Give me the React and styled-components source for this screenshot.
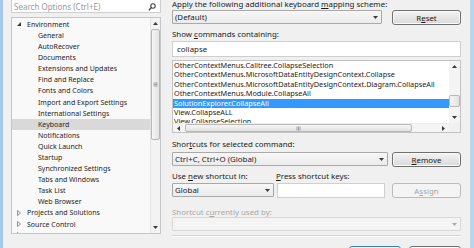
import React from "react";
import styled, { createGlobalStyle } from "styled-components";

const Global = createGlobalStyle`
  html, body { margin: 0; padding: 0; background: #f0f0f0; overflow: hidden; }
  body { font-family: "Noto Sans", "DejaVu Sans", sans-serif; color: #1b1b1b; }
  * { box-sizing: border-box; }
`;

const Frame = styled.div`
  width: 474px;
  height: 248px;
  display: flex;
  overflow: hidden;
  background: #f0f0f0;
`;

const Edge = styled.div`
  flex: 0 0 ${(p) => p.$w}px;
  background: ${(p) => p.$c};
`;

const Body = styled.div`
  flex: 1;
  min-width: 0;
  display: flex;
  gap: 11px;
  padding: 0 9px 0 8px;
`;

const LeftCol = styled.div`
  width: 150px;
  flex: 0 0 150px;
  display: flex;
  flex-direction: column;
  & > * { flex-shrink: 0; }
`;

const SearchBox = styled.div`
  height: 20px;
  margin-top: -7px;
  padding: 7px 4px 0 2px;
  border: 1px solid #cfcfcf;
  background: #fff;
  display: flex;
  align-items: center;
  justify-content: space-between;
  font-size: 8px;
  color: #9a9a9a;
  white-space: nowrap;
`;

const Tree = styled.div`
  margin-top: 4px;
  height: 217px;
  border: 1px solid #c6c6c6;
  background: #f9f9f9;
  display: grid;
  grid-template-columns: minmax(0, 1fr) 10px;
  grid-template-rows: minmax(0, 1fr);
  overflow: hidden;
`;

const TreeRows = styled.div`
  padding-top: 0.8px;
  min-width: 0;
  overflow: hidden;
`;

const TreeRow = styled.div`
  height: 11.1px;
  display: flex;
  align-items: center;
  padding-left: ${(p) => (p.$child ? 26 : 5)}px;
  background: ${(p) => (p.$selected ? "#d9d9d9" : "transparent")};
  font-size: 7px;
  white-space: nowrap;
  color: #1e1e1e;
`;

const Expander = styled.span`
  width: 10px;
  flex: 0 0 10px;
  display: flex;
  align-items: center;
`;

const VScroll = styled.div`
  display: flex;
  flex-direction: column;
  background: #f3f3f3;
  border-left: 1px solid #e4e4e4;
  min-height: 0;
  overflow: hidden;
`;

const ArrowBtn = styled.div`
  height: ${(p) => p.$h}px;
  flex: 0 0 ${(p) => p.$h}px;
  display: flex;
  align-items: center;
  justify-content: center;
`;

const Track = styled.div`
  flex: 1;
  min-height: 0;
  min-width: 0;
  display: flex;
  flex-direction: ${(p) => (p.$horizontal ? "row" : "column")};
  padding-${(p) => (p.$horizontal ? "left" : "top")}: ${(p) => p.$offset}px;
`;

const Thumb = styled.div`
  ${(p) =>
    p.$horizontal
      ? `width: ${p.$len}px; height: 100%;`
      : `height: ${p.$len}px; width: 100%;`}
  flex-shrink: 0;
  border: 1px solid #b8b8b8;
  border-radius: 2px;
  background: linear-gradient(${(p) => (p.$horizontal ? "180deg" : "90deg")}, #f6f6f6, #e2e2e2);
  display: flex;
  align-items: center;
  justify-content: center;
`;

const RightCol = styled.div`
  width: 289px;
  flex: 0 0 289px;
  display: flex;
  flex-direction: column;
  & > * { flex-shrink: 0; }
`;

const Label = styled.div`
  font-size: 7.9px;
  line-height: 9px;
  height: 9px;
  margin-top: ${(p) => p.$mt || 0}px;
  color: ${(p) => (p.$disabled ? "#a8a8a8" : "#1b1b1b")};
  white-space: nowrap;
  width: ${(p) => (p.$w ? `${p.$w}px` : "auto")};
  flex-shrink: 0;
`;

const U = styled.span`
  text-decoration: underline;
`;

const Row = styled.div`
  display: flex;
  align-items: flex-start;
  gap: ${(p) => p.$gap}px;
  margin-top: ${(p) => p.$mt || 0}px;
  justify-content: ${(p) => p.$justify || "flex-start"};
  & > * { flex-shrink: 0; }
`;

const Combo = styled.div`
  width: ${(p) => (p.$w ? `${p.$w}px` : "100%")};
  height: 14px;
  border: 1px solid ${(p) => (p.$disabled ? "#d6d6d6" : "#a9a9a9")};
  border-radius: 1px;
  background: ${(p) =>
    p.$disabled ? "#f4f4f4" : "linear-gradient(#f7f7f7, #ebebeb)"};
  display: flex;
  align-items: center;
  justify-content: space-between;
  padding: 0 3px 0 2px;
  font-size: 7.9px;
  color: #1b1b1b;
  white-space: nowrap;
`;

const Button = styled.div`
  width: ${(p) => p.$w}px;
  height: ${(p) => p.$h || 15}px;
  margin-left: ${(p) => p.$ml || 0}px;
  border: 1px solid
    ${(p) => (p.$default ? "#3c7fb1" : p.$disabled ? "#b8bcbf" : "#707070")};
  border-radius: 3px;
  background: ${(p) =>
    p.$disabled ? "#f4f4f4" : "linear-gradient(#f4f4f4, #e6e6e6 50%, #dadada)"};
  box-shadow: inset 0 0 0 1px ${(p) => (p.$disabled ? "transparent" : "#fbfbfb")};
  display: flex;
  align-items: center;
  justify-content: center;
  font-size: 7.9px;
  color: ${(p) => (p.$disabled ? "#a6a6a6" : "#1b1b1b")};
`;

const TextBox = styled.div`
  width: ${(p) => (p.$w ? `${p.$w}px` : "100%")};
  height: ${(p) => p.$h}px;
  margin-top: ${(p) => p.$mt || 0}px;
  border: 1px solid #cfcfcf;
  background: #fff;
  display: flex;
  align-items: center;
  padding-left: 4px;
  font-size: 7.9px;
`;

const ListBox = styled.div`
  margin-top: 3px;
  height: 73px;
  border: 1px solid #c3c3c3;
  background: #fff;
  display: grid;
  grid-template-columns: minmax(0, 1fr) 11px;
  grid-template-rows: minmax(0, 1fr) 9px;
  overflow: hidden;
`;

const ListRows = styled.div`
  overflow: hidden;
  min-width: 0;
  min-height: 0;
`;

const ListRow = styled.div`
  height: 9.4px;
  line-height: 9.4px;
  padding-left: 1px;
  font-size: 7.3px;
  white-space: nowrap;
  background: ${(p) => (p.$selected ? "#3399ff" : "transparent")};
  color: ${(p) => (p.$selected ? "#ffffff" : "#1b1b1b")};
`;

const ListVScroll = styled.div`
  display: flex;
  flex-direction: column;
  background: #f4f4f4;
  min-height: 0;
  overflow: hidden;
`;

const HScroll = styled.div`
  display: flex;
  background: #f4f4f4;
  border-top: 1px solid #ececec;
  min-width: 0;
  overflow: hidden;
`;

const HArrow = styled.div`
  width: ${(p) => p.$w}px;
  flex: 0 0 ${(p) => p.$w}px;
  display: flex;
  align-items: center;
  justify-content: center;
`;

const Corner = styled.div`
  background: #f0f0f0;
`;

const Separator = styled.div`
  margin-top: 4px;
  border-top: 1px solid #d5d5d5;
  border-bottom: 1px solid #ffffff;
`;

const Arrow = ({ dir = "down", size = 5, color = "#3a3a3a" }) => {
  const pts = {
    down: "0,0 5,0 2.5,3",
    up: "0,3 5,3 2.5,0",
    left: "3,0 3,5 0,2.5",
    right: "0,0 0,5 3,2.5",
  }[dir];
  const vertical = dir === "up" || dir === "down";
  return (
    <svg
      width={vertical ? size : 3}
      height={vertical ? 3 : size}
      viewBox={vertical ? "0 0 5 3" : "0 0 3 5"}
    >
      <polygon points={pts} fill={color} />
    </svg>
  );
};

const Grip = ({ horizontal }) => (
  <svg width="5" height="5" viewBox="0 0 5 5">
    {horizontal
      ? [0.5, 2, 3.5].map((x) => (
          <line key={x} x1={x + 0.5} y1="0.5" x2={x + 0.5} y2="4.5" stroke="#8a8a8a" strokeWidth="0.8" />
        ))
      : [0.5, 2, 3.5].map((y) => (
          <line key={y} x1="0.5" y1={y + 0.5} x2="4.5" y2={y + 0.5} stroke="#8a8a8a" strokeWidth="0.8" />
        ))}
  </svg>
);

const SearchIcon = () => (
  <svg width="8" height="8" viewBox="0 0 8 8">
    <circle cx="5" cy="3" r="2.2" fill="none" stroke="#444" strokeWidth="1.1" />
    <line x1="3.4" y1="4.6" x2="0.8" y2="7.2" stroke="#444" strokeWidth="1.4" />
  </svg>
);

const ExpandedGlyph = () => (
  <svg width="4" height="4" viewBox="0 0 4 4">
    <polygon points="4,0 4,4 0,4" fill="#333" />
  </svg>
);

const CollapsedGlyph = () => (
  <svg width="4" height="6" viewBox="0 0 4 6">
    <polygon points="0.5,0.5 3.5,3 0.5,5.5" fill="none" stroke="#777" strokeWidth="0.8" />
  </svg>
);

const treeItems = [
  { t: "Environment", top: true, open: true },
  { t: "General" },
  { t: "AutoRecover" },
  { t: "Documents" },
  { t: "Extensions and Updates" },
  { t: "Find and Replace" },
  { t: "Fonts and Colors" },
  { t: "Import and Export Settings" },
  { t: "International Settings" },
  { t: "Keyboard", sel: true },
  { t: "Notifications" },
  { t: "Quick Launch" },
  { t: "Startup" },
  { t: "Synchronized Settings" },
  { t: "Tabs and Windows" },
  { t: "Task List" },
  { t: "Web Browser" },
  { t: "Projects and Solutions", top: true },
  { t: "Source Control", top: true },
  { t: "Text Editor", top: true },
];

const commands = [
  "OtherContextMenus.Calltree.CollapseSelection",
  "OtherContextMenus.MicrosoftDataEntityDesignContext.Collapse",
  "OtherContextMenus.MicrosoftDataEntityDesignContext.Diagram.CollapseAll",
  "OtherContextMenus.Module.CollapseAll",
  "SolutionExplorer.CollapseAll",
  "View.CollapseALL",
  "View.CollapseSelection",
];

export default function App() {
  return (
    <>
      <Global />
      <Frame>
        <Edge $w={3} $c="#a8c8ea" />
        <Body>
          <LeftCol>
            <SearchBox>
              <span>Search Options (Ctrl+E)</span>
              <SearchIcon />
            </SearchBox>
            <Tree>
              <TreeRows>
                {treeItems.map((it) => (
                  <TreeRow key={it.t} $child={!it.top} $selected={it.sel}>
                    {it.top && (
                      <Expander>{it.open ? <ExpandedGlyph /> : <CollapsedGlyph />}</Expander>
                    )}
                    {it.t}
                  </TreeRow>
                ))}
              </TreeRows>
              <VScroll>
                <ArrowBtn $h={11}>
                  <Arrow dir="up" />
                </ArrowBtn>
                <Track $offset={0}>
                  <Thumb $len={111}>
                    <Grip />
                  </Thumb>
                </Track>
                <ArrowBtn $h={11}>
                  <Arrow dir="down" />
                </ArrowBtn>
              </VScroll>
            </Tree>
          </LeftCol>

          <RightCol>
            <Label>
              Apply the following additional keyboard <U>m</U>apping scheme:
            </Label>
            <Row $gap={10} $mt={1}>
              <Combo $w={210}>
                <span>(Default)</span>
                <Arrow />
              </Combo>
              <Button $w={69}>
                R<U>e</U>set
              </Button>
            </Row>
            <Label $mt={5}>
              Show <U>c</U>ommands containing:
            </Label>
            <TextBox $h={16} $mt={2}>
              collapse
            </TextBox>
            <ListBox>
              <ListRows>
                {commands.map((c) => (
                  <ListRow key={c} $selected={c === "SolutionExplorer.CollapseAll"}>
                    {c}
                  </ListRow>
                ))}
              </ListRows>
              <ListVScroll>
                <ArrowBtn $h={11}>
                  <Arrow dir="up" />
                </ArrowBtn>
                <Track $offset={23}>
                  <Thumb $len={12} />
                </Track>
                <ArrowBtn $h={12}>
                  <Arrow dir="down" />
                </ArrowBtn>
              </ListVScroll>
              <HScroll>
                <HArrow $w={10}>
                  <Arrow dir="left" />
                </HArrow>
                <Track $horizontal $offset={2}>
                  <Thumb $horizontal $len={227}>
                    <Grip horizontal />
                  </Thumb>
                </Track>
                <HArrow $w={12}>
                  <Arrow dir="right" />
                </HArrow>
              </HScroll>
              <Corner />
            </ListBox>
            <Label $mt={7}>
              Shor<U>t</U>cuts for selected command:
            </Label>
            <Row $gap={4} $mt={3}>
              <Combo $w={216}>
                <span>Ctrl+C, Ctrl+O (Global)</span>
                <Arrow />
              </Combo>
              <Button $w={69}>
                <U>R</U>emove
              </Button>
            </Row>
            <Row $gap={2} $mt={5}>
              <Label $w={102}>
                Use <U>n</U>ew shortcut in:
              </Label>
              <Label>
                <U>P</U>ress shortcut keys:
              </Label>
            </Row>
            <Row $gap={3} $mt={2}>
              <Combo $w={102}>
                <span>Global</span>
                <Arrow />
              </Combo>
              <TextBox $w={108} $h={15} />
              <Button $w={69} $disabled $ml={4}>
                A<U>s</U>sign
              </Button>
            </Row>
            <Label $mt={10} $disabled>
              Shortcut c<U>u</U>rrently used by:
            </Label>
            <Combo $disabled>
              <span />
              <Arrow color="#a8a8a8" />
            </Combo>
            <Separator />
            <Row $gap={8} $mt={9} $justify="flex-end">
              <Button $w={52} $h={22} $default />
              <Button $w={52} $h={22} />
            </Row>
          </RightCol>
        </Body>
        <Edge $w={4} $c="#b9d4ef" />
      </Frame>
    </>
  );
}
